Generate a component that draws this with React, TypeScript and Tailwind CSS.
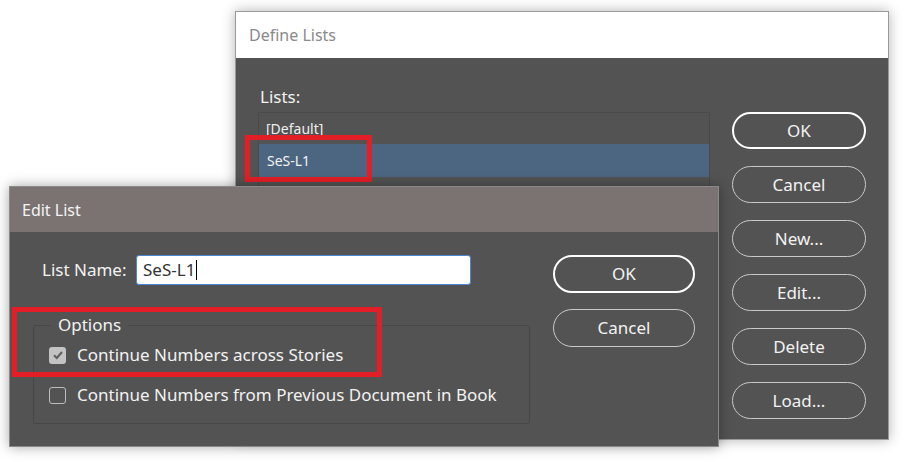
import React from "react";

const font = { fontFamily: '"Noto Sans", "Open Sans", sans-serif' };

function PillButton({ label, primary = false, className = "" }: { label: string; primary?: boolean; className?: string }) {
  return (
    <div
      className={`flex items-center justify-center rounded-full text-[17px] text-[#f2f2f2] ${
        primary ? "border-[2.5px] border-white" : "border border-[#c9c9c9]"
      } ${className}`}
    >
      {label}
    </div>
  );
}

function Checkbox({ checked }: { checked: boolean }) {
  if (checked) {
    return (
      <div className="flex h-[17px] w-[17px] shrink-0 items-center justify-center rounded-[3px] bg-[#c3c3c3]">
        <svg width="12" height="12" viewBox="0 0 12 12">
          <path d="M2 6.2 L4.8 9 L10 3" fill="none" stroke="#5e5e5e" strokeWidth="2" />
        </svg>
      </div>
    );
  }
  return <div className="h-[17px] w-[17px] shrink-0 rounded-[3px] border-[1.5px] border-[#bdbdbd]" />;
}

function DefineLists() {
  const buttons = ["Cancel", "New...", "Edit...", "Delete", "Load..."];
  return (
    <div className="absolute left-[235px] top-[11px] flex h-[429px] w-[654px] flex-col border border-[#9a9a9a] shadow-[0_0_12px_rgba(0,0,0,0.3)]">
      <div className="flex h-[46px] items-center bg-white pl-[13px] text-[16px] text-[#8a8a8a]">Define Lists</div>
      <div className="flex flex-1 bg-[#535353] pl-[22px] pt-[28px]">
        <div className="flex w-[452px] flex-col">
          <div className="h-[26px] pl-[2px] text-[17px] leading-[22px] text-[#f2f2f2]">Lists:</div>
          <div className="flex flex-col border border-[#4a4a4a]">
            <div className="flex h-[31px] items-center pl-[7px] text-[14px] text-[#eeeeee]">[Default]</div>
            <div className="flex h-[33px] items-center bg-[#4c6580] pl-[8px] text-[14px] text-[#f2f2f2]">SeS-L1</div>
            <div className="h-[40px]" />
          </div>
        </div>
        <div className="ml-[22px] flex flex-col gap-[17px] pt-[26px]">
          <PillButton label="OK" primary className="h-[37px] w-[134px]" />
          {buttons.map((b) => (
            <PillButton key={b} label={b} className="h-[37px] w-[134px]" />
          ))}
        </div>
      </div>
    </div>
  );
}

function EditList() {
  return (
    <div className="absolute left-[9px] top-[186px] flex h-[261px] w-[710px] flex-col border border-[#8a8a8a] shadow-[0_0_12px_rgba(0,0,0,0.35)]">
      <div className="flex h-[45px] items-center bg-[#7a7371] pl-[12px] text-[16px] text-[#f4f4f4]">Edit List</div>
      <div className="flex flex-1 bg-[#535353] pl-[23px] pt-[23px]">
        <div className="flex w-[497px] flex-col">
          <div className="flex items-center">
            <span className="w-[103px] pl-[9px] text-[17px] text-[#f2f2f2]">List Name:</span>
            <div className="flex h-[30px] w-[335px] items-center rounded-[3px] border border-[#4a88d0] bg-white pl-[6px] text-[17px] text-[#333333]">
              SeS-L1<span className="ml-[1px] inline-block h-[20px] w-px bg-black" />
            </div>
          </div>
          <div className="relative mt-[40px] h-[99px] rounded-[3px] border border-[#474747]">
            <span className="absolute left-[17px] top-[-12px] bg-[#535353] px-[7px] text-[17px] leading-[22px] text-[#f2f2f2]">Options</span>
            <div className="flex flex-col gap-[22px] pl-[15px] pt-[20px]">
              <div className="flex items-center gap-[11px]">
                <Checkbox checked />
                <span className="whitespace-nowrap text-[17px] leading-[18px] text-[#f2f2f2]">Continue Numbers across Stories</span>
              </div>
              <div className="flex items-center gap-[11px]">
                <Checkbox checked={false} />
                <span className="whitespace-nowrap text-[17px] leading-[18px] text-[#f2f2f2]">Continue Numbers from Previous Document in Book</span>
              </div>
            </div>
          </div>
        </div>
        <div className="ml-[23px] flex flex-col gap-[16px]">
          <PillButton label="OK" primary className="h-[38px] w-[142px]" />
          <PillButton label="Cancel" className="h-[38px] w-[142px]" />
        </div>
      </div>
    </div>
  );
}

export default function App() {
  return (
    <div className="relative h-[462px] w-[914px] overflow-hidden bg-white" style={font}>
      <DefineLists />
      <div className="absolute left-[245px] top-[135px] h-[47px] w-[127px] border-[5px] border-[#e41e26]" />
      <EditList />
      <div className="absolute left-[12px] top-[307px] h-[70px] w-[370px] border-[5px] border-[#e41e26]" />
    </div>
  );
}
